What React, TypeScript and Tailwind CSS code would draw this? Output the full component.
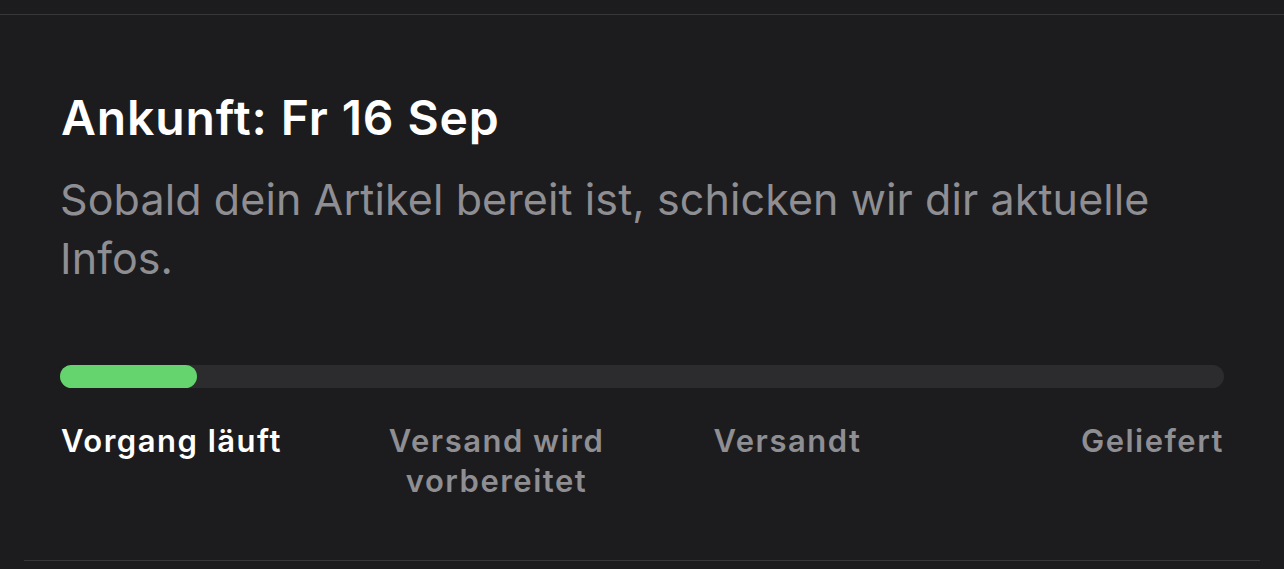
export default function App() {
  const steps = ["Vorgang läuft", "Versand wird vorbereitet", "Versandt", "Geliefert"];
  return (
    <div
      className="w-[1284px] h-[569px] bg-[#1c1c1e] overflow-hidden flex flex-col"
      style={{ fontFamily: "Inter, 'Noto Sans', sans-serif" }}
    >
      <div className="h-[14px] shrink-0" />
      <div className="h-px bg-[#38383a] shrink-0" />
      <div className="px-[60px] pt-[74px] flex flex-col">
        <h1 className="text-[48px] leading-[58px] font-semibold text-white tracking-[0.9px] pl-[1px]">
          Ankunft: Fr 16 Sep
        </h1>
        <p className="mt-[23px] text-[43px] leading-[59px] text-[#8e8e93] tracking-[0.1px] pr-[40px]">
          Sobald dein Artikel bereit ist, schicken wir dir aktuelle Infos.
        </p>
        <div className="mt-[77px] h-[23px] rounded-full bg-[#2c2c2e]">
          <div className="h-full w-[137px] rounded-full bg-[#65d36e]" />
        </div>
        <div className="mt-[33px] grid grid-cols-4 text-[31px] leading-[40px] font-semibold tracking-[1.5px]">
          <div className="text-left text-white pl-[1px] whitespace-nowrap">{steps[0]}</div>
          <div className="text-center text-[#8e8e93] px-[40px] -mx-[20px]">{steps[1]}</div>
          <div className="text-center text-[#8e8e93]">{steps[2]}</div>
          <div className="text-right text-[#8e8e93]">{steps[3]}</div>
        </div>
      </div>
      <div className="flex-1" />
      <div className="mx-[24px] h-px bg-[#38383a] shrink-0" />
      <div className="h-[8px] shrink-0" />
    </div>
  );
}
